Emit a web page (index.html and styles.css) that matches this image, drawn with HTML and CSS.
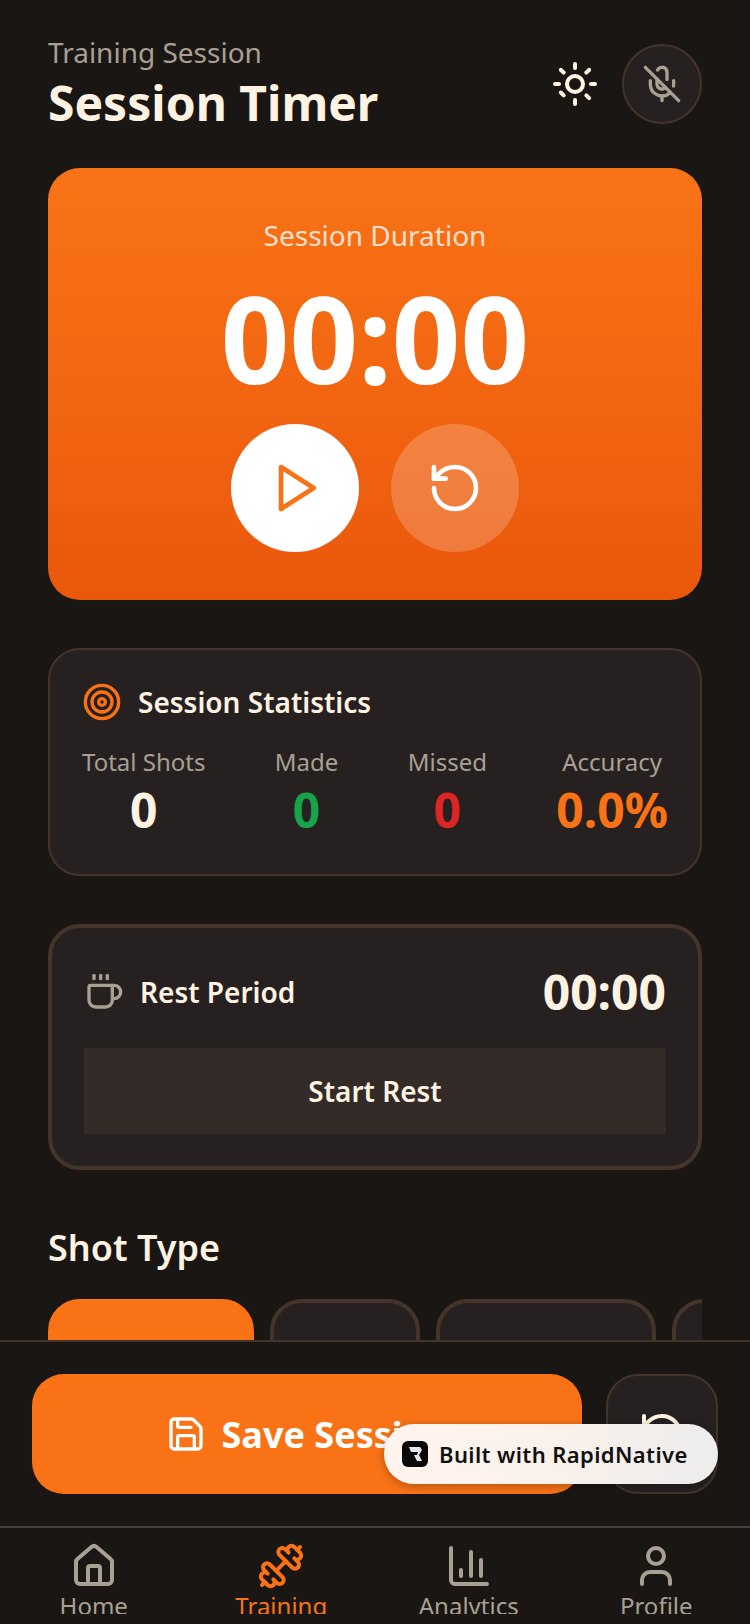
FILE: index.html
```html
<!DOCTYPE html>
<html lang="en">
<head>
  <meta charset="UTF-8">
  <title>Session Timer</title>
  <link rel="stylesheet" href="styles.css">
</head>
<body>

  <main class="content">
    <header class="top">
      <div>
        <p class="top-label">Training Session</p>
        <h1 class="top-title">Session Timer</h1>
      </div>
      <div class="top-actions">
        <svg class="icon icon-48 cream" viewBox="0 0 24 24"><circle cx="12" cy="12" r="4"/><path d="M12 2v2"/><path d="M12 20v2"/><path d="m4.93 4.93 1.41 1.41"/><path d="m17.66 17.66 1.41 1.41"/><path d="M2 12h2"/><path d="M20 12h2"/><path d="m6.34 17.66-1.41-1.41"/><path d="m19.07 4.93-1.41 1.41"/></svg>
        <div class="round-btn">
          <svg class="icon icon-40 muted" viewBox="0 0 24 24"><line x1="2" x2="22" y1="2" y2="22"/><path d="M18.89 13.23A7.12 7.12 0 0 0 19 12v-2"/><path d="M5 10v2a7 7 0 0 0 12 5"/><path d="M15 9.34V5a3 3 0 0 0-5.68-1.33"/><path d="M9 9v3a3 3 0 0 0 5.12 2.12"/><line x1="12" x2="12" y1="19" y2="22"/></svg>
        </div>
      </div>
    </header>

    <section class="timer-card">
      <p class="timer-label">Session Duration</p>
      <p class="timer-value">00:00</p>
      <div class="timer-controls">
        <div class="timer-btn timer-btn-play">
          <svg class="icon icon-56 orange" viewBox="0 0 24 24"><polygon points="6 3 20 12 6 21 6 3"/></svg>
        </div>
        <div class="timer-btn timer-btn-reset">
          <svg class="icon icon-56 white" viewBox="0 0 24 24"><path d="M3 12a9 9 0 1 0 9-9 9.75 9.75 0 0 0-6.74 2.74L3 8"/><path d="M3 3v5h5"/></svg>
        </div>
      </div>
    </section>

    <section class="stats-card">
      <div class="card-head">
        <svg class="icon icon-40 orange" viewBox="0 0 24 24"><circle cx="12" cy="12" r="10"/><circle cx="12" cy="12" r="6"/><circle cx="12" cy="12" r="2"/></svg>
        <h2 class="card-title">Session Statistics</h2>
      </div>
      <div class="stats-row">
        <div class="stat">
          <span class="stat-label">Total Shots</span>
          <span class="stat-value">0</span>
        </div>
        <div class="stat">
          <span class="stat-label">Made</span>
          <span class="stat-value green">0</span>
        </div>
        <div class="stat">
          <span class="stat-label">Missed</span>
          <span class="stat-value red">0</span>
        </div>
        <div class="stat">
          <span class="stat-label">Accuracy</span>
          <span class="stat-value text-orange">0.0%</span>
        </div>
      </div>
    </section>

    <section class="rest-card">
      <div class="rest-head">
        <div class="rest-name">
          <svg class="icon icon-40 muted" viewBox="0 0 24 24"><path d="M10 2v2"/><path d="M14 2v2"/><path d="M16 8a1 1 0 0 1 1 1v8a4 4 0 0 1-4 4H7a4 4 0 0 1-4-4V9a1 1 0 0 1 1-1h14a4 4 0 1 1 0 8h-1"/><path d="M6 2v2"/></svg>
          <h2 class="card-title">Rest Period</h2>
        </div>
        <span class="rest-time">00:00</span>
      </div>
      <div class="rest-btn">Start Rest</div>
    </section>

    <h2 class="section-title">Shot Type</h2>
    <div class="chips">
      <div class="chip chip-active"></div>
      <div class="chip chip-b"></div>
      <div class="chip chip-c"></div>
      <div class="chip chip-d"></div>
    </div>
  </main>

  <div class="action-bar">
    <div class="save-btn">
      <svg class="icon icon-40 white" viewBox="0 0 24 24"><path d="M15.2 3a2 2 0 0 1 1.4.6l3.8 3.8a2 2 0 0 1 .6 1.4V19a2 2 0 0 1-2 2H5a2 2 0 0 1-2-2V5a2 2 0 0 1 2-2z"/><path d="M17 21v-7a1 1 0 0 0-1-1H8a1 1 0 0 0-1 1v7"/><path d="M7 3v4a1 1 0 0 0 1 1h7"/></svg>
      <span>Save Session</span>
    </div>
    <div class="undo-btn">
      <svg class="icon icon-48 cream" viewBox="0 0 24 24"><path d="M3 12a9 9 0 1 0 9-9 9.75 9.75 0 0 0-6.74 2.74L3 8"/><path d="M3 3v5h5"/></svg>
    </div>
  </div>

  <nav class="tabs">
    <div class="tab">
      <svg class="icon icon-48 muted" viewBox="0 0 24 24"><path d="M15 21v-8a1 1 0 0 0-1-1h-4a1 1 0 0 0-1 1v8"/><path d="M3 10a2 2 0 0 1 .709-1.528l7-6a2 2 0 0 1 2.582 0l7 6A2 2 0 0 1 21 10v9a2 2 0 0 1-2 2H5a2 2 0 0 1-2-2z"/></svg>
      <span>Home</span>
    </div>
    <div class="tab tab-active">
      <svg class="icon icon-48 orange" viewBox="0 0 24 24"><path d="M17.596 12.768a2 2 0 1 0 2.829-2.829l-1.768-1.767a2 2 0 0 0 2.828-2.829l-2.828-2.828a2 2 0 0 0-2.829 2.828l-1.767-1.768a2 2 0 1 0-2.829 2.829z"/><path d="m2.5 21.5 1.4-1.4"/><path d="m20.1 3.9 1.4-1.4"/><path d="M5.343 21.485a2 2 0 1 0 2.829-2.828l1.767 1.768a2 2 0 1 0 2.829-2.829l-6.364-6.364a2 2 0 1 0-2.829 2.829l1.768 1.767a2 2 0 0 0-2.828 2.829z"/><path d="m9.6 14.4 4.8-4.8"/></svg>
      <span>Training</span>
    </div>
    <div class="tab">
      <svg class="icon icon-48 muted" viewBox="0 0 24 24"><path d="M3 3v16a2 2 0 0 0 2 2h16"/><path d="M18 17V9"/><path d="M13 17V5"/><path d="M8 17v-3"/></svg>
      <span>Analytics</span>
    </div>
    <div class="tab">
      <svg class="icon icon-48 muted" viewBox="0 0 24 24"><path d="M19 21v-2a4 4 0 0 0-4-4H9a4 4 0 0 0-4 4v2"/><circle cx="12" cy="7" r="4"/></svg>
      <span>Profile</span>
    </div>
  </nav>

  <div class="badge">
    <div class="badge-logo">
      <svg viewBox="0 0 26 26" class="badge-r"><path d="M7 6h11l2 3-3 5 3 6h-5l-3-6h3l1-3H9z"/></svg>
    </div>
    <span>Built with RapidNative</span>
  </div>

</body>
</html>
```

FILE: styles.css
```css
* {
  box-sizing: border-box;
}
html, body {
  margin: 0;
  height: 1624px;
  overflow: hidden;
}
body {
  position: relative;
  display: flex;
  flex-direction: column;
  background-color: #1a1613;
  font-family: "Noto Sans", "Open Sans", sans-serif;
  color: #fef3e2;
}
h1, h2, p {
  margin: 0;
}

.icon {
  flex: none;
  fill: none;
  stroke: currentColor;
  stroke-width: 2;
  stroke-linecap: round;
  stroke-linejoin: round;
}
.icon-40 { width: 40px; height: 40px; }
.icon-48 { width: 48px; height: 48px; }
.icon-56 { width: 56px; height: 56px; }
.cream { color: #fef3e2; }
.muted { color: #a8a093; }
.orange { color: #f97316; }
.white { color: #fff; }

.content {
  flex: 1;
  min-height: 0;
  overflow: hidden;
  padding: 32px 48px 0;
}

.top {
  display: flex;
  justify-content: space-between;
  align-items: center;
  height: 104px;
}
.top-label {
  font-size: 28px;
  line-height: 38px;
  color: #a8a093;
}
.top-title {
  font-size: 48px;
  line-height: 64px;
  font-weight: 700;
}
.top-actions {
  display: flex;
  align-items: center;
  gap: 23px;
}
.round-btn {
  width: 80px;
  height: 80px;
  display: flex;
  align-items: center;
  justify-content: center;
  border: 2px solid #44342a;
  border-radius: 50%;
  background-color: #262120;
}

.timer-card {
  margin-top: 32px;
  height: 432px;
  padding: 48px;
  border-radius: 32px;
  background: linear-gradient(#f97316, #ea580c);
  text-align: center;
  color: #fff;
}
.timer-label {
  font-size: 28px;
  line-height: 38px;
  color: rgba(255, 255, 255, 0.8);
}
.timer-value {
  margin: 12px 0 14px;
  font-size: 120px;
  line-height: 144px;
  font-weight: 700;
}
.timer-controls {
  display: flex;
  justify-content: center;
  gap: 32px;
}
.timer-btn {
  width: 128px;
  height: 128px;
  display: flex;
  align-items: center;
  justify-content: center;
  border-radius: 50%;
}
.timer-btn-play {
  background-color: #fff;
}
.timer-btn-reset {
  background-color: rgba(255, 255, 255, 0.2);
}

.stats-card {
  margin-top: 48px;
  padding: 32px;
  border: 2px solid #44342a;
  border-radius: 32px;
  background-color: #262120;
}
.card-head {
  display: flex;
  align-items: center;
  gap: 16px;
}
.card-title {
  font-size: 28px;
  line-height: 38px;
  font-weight: 600;
}
.stats-row {
  display: flex;
  justify-content: space-between;
  margin-top: 24px;
}
.stat {
  display: flex;
  flex-direction: column;
  align-items: center;
}
.stat-label {
  font-size: 24px;
  line-height: 32px;
  color: #a8a093;
}
.stat-value {
  font-size: 48px;
  line-height: 64px;
  font-weight: 700;
}
.green { color: #16a34a; }
.red { color: #dc2626; }
.text-orange { color: #f97316; }

.rest-card {
  margin-top: 48px;
  padding: 32px;
  border: 4px solid #44342a;
  border-radius: 32px;
  background-color: #262120;
}
.rest-head {
  display: flex;
  justify-content: space-between;
  align-items: center;
  margin-bottom: 24px;
}
.rest-name {
  display: flex;
  align-items: center;
  gap: 16px;
}
.rest-time {
  font-size: 48px;
  line-height: 64px;
  font-weight: 700;
}
.rest-btn {
  padding: 24px;
  background-color: #332b28;
  font-size: 28px;
  line-height: 38px;
  font-weight: 600;
  text-align: center;
}

.section-title {
  margin-top: 48px;
  font-size: 36px;
  line-height: 60px;
  font-weight: 600;
}
.chips {
  display: flex;
  gap: 16px;
  margin-top: 21px;
  overflow: hidden;
}
.chip {
  flex: none;
  height: 80px;
  border: 4px solid #44342a;
  border-radius: 32px;
  background-color: #262120;
}
.chip-active {
  width: 206px;
  border-color: #f97316;
  background-color: #f97316;
}
.chip-b { width: 150px; }
.chip-c { width: 220px; }
.chip-d { width: 120px; }

.action-bar {
  display: flex;
  gap: 24px;
  padding: 32px;
  border-top: 2px solid #44342a;
}
.save-btn {
  flex: 1;
  height: 120px;
  display: flex;
  align-items: center;
  justify-content: center;
  gap: 16px;
  border-radius: 32px;
  background-color: #f97316;
  color: #fff;
  font-size: 36px;
  font-weight: 700;
}
.undo-btn {
  width: 112px;
  height: 120px;
  display: flex;
  align-items: center;
  justify-content: center;
  border: 2px solid #44342a;
  border-radius: 32px;
  background-color: #262120;
}

.tabs {
  display: flex;
  height: 88px;
  overflow: hidden;
  margin-bottom: 10px;
  border-top: 2px solid #44403c;
  padding-top: 14px;
}
.tab {
  flex: 1;
  display: flex;
  flex-direction: column;
  align-items: center;
  font-size: 24px;
  line-height: 32px;
  color: #a8a093;
}
.tab-active {
  color: #f97316;
}

/* floats over the action bar */
.badge {
  position: absolute;
  left: 384px;
  top: 1424px;
  width: 334px;
  height: 60px;
  display: flex;
  align-items: center;
  gap: 11px;
  padding-left: 18px;
  border-radius: 30px;
  background: linear-gradient(90deg, #fff5ee, #faf1ea 50%, #ececec);
  box-shadow: 0 2px 10px rgba(0, 0, 0, 0.3);
  color: #111;
  font-size: 22px;
  font-weight: 600;
  letter-spacing: 0.4px;
}
.badge-logo {
  flex: none;
  width: 26px;
  height: 26px;
  border-radius: 6px;
  background-color: #0a0a0a;
}
.badge-r {
  display: block;
  width: 26px;
  height: 26px;
  fill: #e8e8e8;
}
```
